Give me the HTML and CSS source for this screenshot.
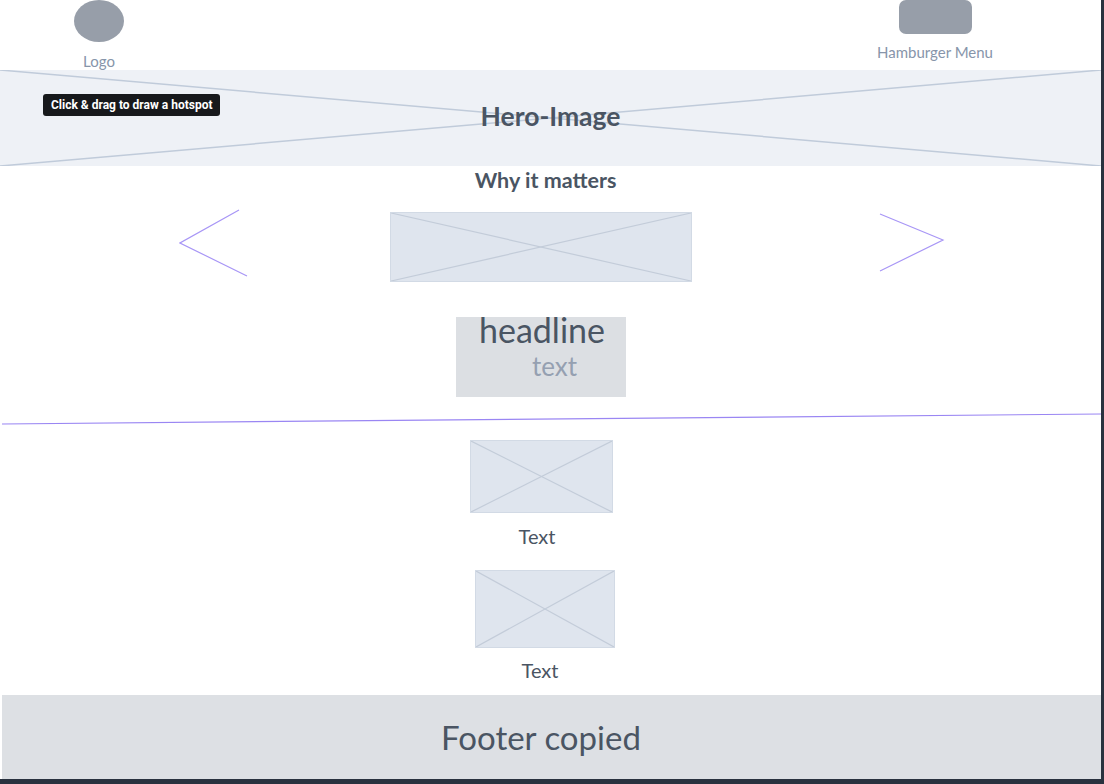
FILE: index.html
```html
<!DOCTYPE html>
<html lang="en">
<head>
<meta charset="utf-8">
<title>Wireframe</title>
<link rel="stylesheet" href="styles.css">
</head>
<body>
<div class="canvas">
  <header class="topbar">
    <div class="logo-block">
      <div class="logo-circle"></div>
      <span class="label">Logo</span>
    </div>
    <div class="menu-block">
      <div class="menu-rect"></div>
      <span class="label">Hamburger Menu</span>
    </div>
  </header>

  <section class="hero">
    <svg class="hero-x" viewBox="0 0 1101 96" preserveAspectRatio="none">
      <line x1="0" y1="0" x2="1101" y2="96"/>
      <line x1="0" y1="96" x2="1101" y2="0"/>
    </svg>
    <h1 class="hero-title">Hero-Image</h1>
    <div class="tooltip">Click &amp; drag to draw a hotspot</div>
  </section>

  <h2 class="why">Why it matters</h2>

  <div class="carousel">
    <svg class="chev chev-left" width="70" height="68" viewBox="0 0 70 68">
      <polyline points="60,1 1,34 68,67"/>
    </svg>
    <div class="ph ph-carousel">
      <svg viewBox="0 0 100 100" preserveAspectRatio="none"><line x1="0" y1="0" x2="100" y2="100"/><line x1="0" y1="100" x2="100" y2="0"/></svg>
    </div>
    <svg class="chev chev-right" width="66" height="60" viewBox="0 0 66 60">
      <polyline points="1,1 64,27 1,58"/>
    </svg>
  </div>

  <div class="headline-box">
    <div class="headline">headline</div>
    <div class="subtext">text</div>
  </div>

  <svg class="divider" viewBox="0 0 1101 12" preserveAspectRatio="none">
    <line x1="2" y1="11" x2="1101" y2="1"/>
  </svg>

  <div class="card card-1">
    <div class="ph ph-card1">
      <svg viewBox="0 0 100 100" preserveAspectRatio="none"><line x1="0" y1="0" x2="100" y2="100"/><line x1="0" y1="100" x2="100" y2="0"/></svg>
    </div>
    <span class="card-text">Text</span>
  </div>

  <div class="card card-2">
    <div class="ph ph-card2">
      <svg viewBox="0 0 100 100" preserveAspectRatio="none"><line x1="0" y1="0" x2="100" y2="100"/><line x1="0" y1="100" x2="100" y2="0"/></svg>
    </div>
    <span class="card-text">Text</span>
  </div>

  <footer class="footer">Footer copied</footer>
</div>
</body>
</html>
```

FILE: styles.css
```css
* { box-sizing: border-box; }

html, body {
  margin: 0;
  padding: 0;
}

body {
  background: #29323f;
  width: 1104px;
  height: 784px;
  overflow: hidden;
  font-family: "Lato", "Open Sans", sans-serif;
}

.canvas {
  position: relative;
  width: 1101px;
  height: 779px;
  background: #ffffff;
  display: flex;
  flex-direction: column;
}

/* Header */
.topbar {
  height: 70px;
  display: flex;
  justify-content: space-between;
  align-items: flex-start;
}

.logo-block {
  margin-left: 74px;
  width: 50px;
  display: flex;
  flex-direction: column;
  align-items: center;
}

.logo-circle {
  width: 50px;
  height: 42px;
  border-radius: 50%;
  background: #979ea9;
}

.menu-block {
  margin-right: 106px;
  width: 120px;
  display: flex;
  flex-direction: column;
  align-items: center;
}

.menu-rect {
  width: 73px;
  height: 34px;
  border-radius: 7px;
  background: #979ea9;
}

.label {
  font-size: 15px;
  color: #8795aa;
  line-height: 18px;
  white-space: nowrap;
}

.logo-block .label { margin-top: 10px; }
.menu-block .label { margin-top: 9px; }

/* Hero */
.hero {
  position: relative;
  height: 96px;
  background: #eef1f6;
  display: flex;
  justify-content: center;
}

.hero-x {
  position: absolute;
  left: 0;
  top: 0;
  width: 100%;
  height: 100%;
}

.hero-x line {
  stroke: #c0cbda;
  stroke-width: 1.5;
}

.hero-title {
  position: relative;
  margin: 31px 0 0 0;
  font-size: 26.5px;
  font-weight: 700;
  line-height: 30px;
  color: #4a5563;
}

.tooltip {
  position: absolute;
  left: 43px;
  top: 24px;
  height: 22px;
  padding: 0 8px;
  background: #17191c;
  color: #ffffff;
  border-radius: 3px;
  font-family: "Roboto", "Inter", sans-serif;
  font-weight: 700;
  font-size: 12px;
  line-height: 22px;
  white-space: nowrap;
}

/* Why it matters */
.why {
  margin: 2px 0 0 -10px;
  text-align: center;
  font-size: 21.5px;
  font-weight: 700;
  line-height: 24px;
  color: #4a5563;
}

/* Carousel */
.carousel {
  margin-top: 17px;
  display: flex;
  align-items: flex-start;
  padding-left: 179px;
  height: 74px;
}

.chev polyline {
  fill: none;
  stroke: #a896f6;
  stroke-width: 1.2;
}

.ph {
  position: relative;
  background: #dfe5ee;
  border: 1px solid #d2dae5;
}

.ph svg {
  position: absolute;
  left: 0;
  top: 0;
  width: 100%;
  height: 100%;
}

.ph line {
  stroke: #c3ccd9;
  stroke-width: 1.2;
  vector-effect: non-scaling-stroke;
}

.ph-carousel {
  width: 302px;
  height: 70px;
  margin-left: 141px;
  margin-top: 3px;
}

.chev-right {
  margin-left: 187px;
  margin-top: 4px;
}

/* Headline box */
.headline-box {
  margin: 34px 0 0 456px;
  width: 170px;
  height: 80px;
  background: #dcdfe3;
  position: relative;
}

.headline {
  margin: -3px 0 0 23px;
  font-size: 34px;
  line-height: 32px;
  color: #4a5563;
}

.subtext {
  margin: 5px 0 0 76px;
  font-size: 26px;
  line-height: 30px;
  color: #95a0b1;
}

/* Divider */
.divider {
  display: block;
  margin-top: 16px;
  width: 1101px;
  height: 12px;
}

.divider line {
  stroke: #9a86f3;
  stroke-width: 1.2;
}

/* Cards */
.card {
  display: flex;
  flex-direction: column;
  align-items: center;
}

.card-1 {
  margin: 15px 0 0 470px;
  width: 143px;
}

.ph-card1 {
  width: 143px;
  height: 73px;
}

.card-2 {
  margin: 22px 0 0 475px;
  width: 140px;
}

.ph-card2 {
  width: 140px;
  height: 78px;
}

.card-text {
  font-size: 20px;
  line-height: 24px;
  color: #4a5563;
}

.card-1 .card-text { margin: 11px 0 0 -9px; }
.card-2 .card-text { margin: 10px 0 0 -10px; }

/* Footer */
.footer {
  margin: auto 0 0 2px;
  height: 84px;
  background: #dde0e4;
  display: flex;
  align-items: center;
  justify-content: center;
  padding-right: 21px;
  font-size: 33px;
  color: #4a5563;
}
```
